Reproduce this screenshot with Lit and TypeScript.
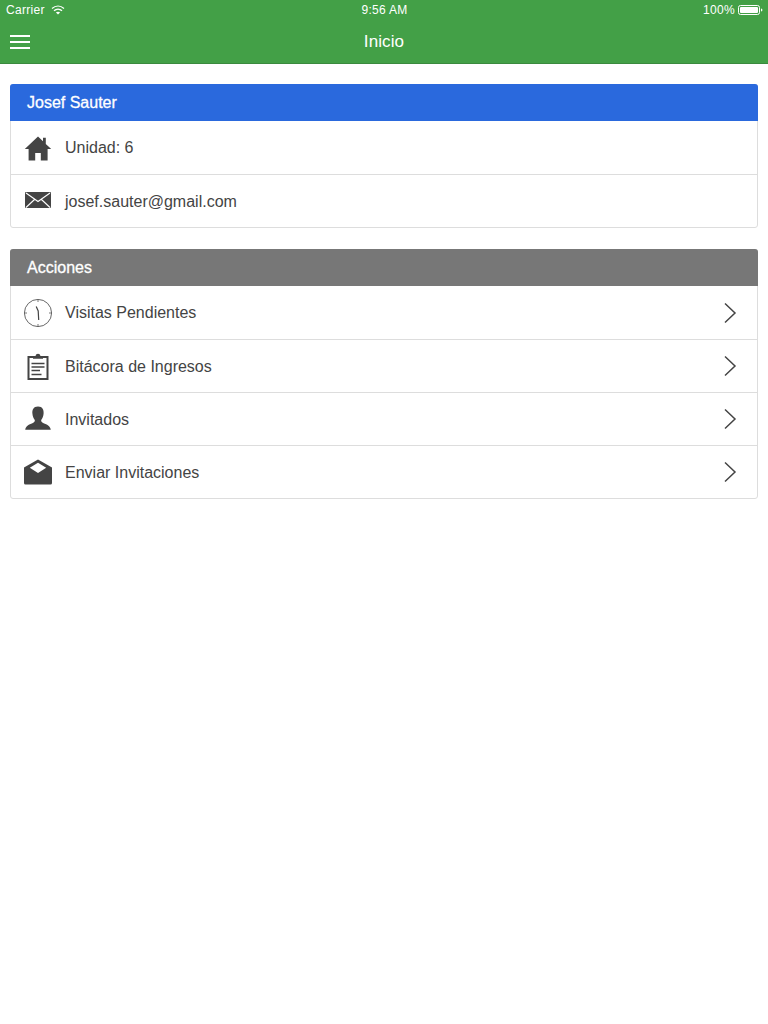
import { LitElement, html, css, svg } from "lit";
import { customElement } from "lit/decorators.js";

const icons: Record<string, unknown> = {
  home: svg`<path fill="#444" d="M14 2.5 L19 7.2 V3.8 H21.8 V9.9 L27.2 15 H23.6 V26.5 H16.8 V19 H11.2 V26.5 H4.6 V15 H0.8 Z"/>`,
  mail: svg`<rect x="1" y="5" width="26" height="16" rx="1" fill="#444"/><path d="M2 6 L14 14.5 L26 6 M2 20.5 L10.5 12.5 M26 20.5 L17.5 12.5" fill="none" stroke="#fff" stroke-width="1.1"/>`,
  clock: svg`<circle cx="14" cy="14" r="13.6" fill="none" stroke="#555" stroke-width="0.9"/><path d="M12.2 7.5 L14.2 12 L14.7 21" fill="none" stroke="#444" stroke-width="1.2"/><g stroke="#777" stroke-width="1"><path d="M14 1v2M14 25v2M1 14h2M25 14h2"/></g>`,
  clip: svg`<path fill="none" stroke="#444" stroke-width="2" d="M9 5 H4.5 V27 H23.5 V5 H19"/><path fill="#444" d="M9 6.8 V4 H11.6 C11.8 1 16.2 1 16.4 4 H19 V6.8 Z"/><path stroke="#444" stroke-width="1.6" d="M7.5 11.5 H20.5 M7.5 15 H20.5 M7.5 18.5 H16 M7.5 22.5 H17.5"/>`,
  user: svg`<path fill="#444" d="M14 1.5 C18.6 1.5 20 5 19.6 8.6 C19.4 11.5 18.4 13.5 17.2 15 C17 16.6 17.6 17.3 19.6 18.2 C23 19.6 26 20.4 26.8 24.8 H1.2 C2 20.4 5 19.6 8.4 18.2 C10.4 17.3 11 16.6 10.8 15 C9.6 13.5 8.6 11.5 8.4 8.6 C8 5 9.4 1.5 14 1.5 Z"/>`,
  open: svg`<path fill="#444" d="M14 1.5 L28 9.5 V25 a1.5 1.5 0 0 1 -1.5 1.5 H1.5 A1.5 1.5 0 0 1 0 25 V9.5 Z"/><path fill="#fff" d="M14 4.8 L22.2 9.8 L14 15 L5.8 9.8 Z"/>`,
};

@customElement("app-root")
export class AppRoot extends LitElement {
  static styles = css`
    :host { display: block; min-height: 1024px; background: #fff; font-family: "Liberation Sans", Arial, sans-serif; color: #444; }
    .nav { height: 64px; box-sizing: border-box; background: #43a047; border-bottom: 1px solid #3a8a3e; color: #fff; display: flex; flex-direction: column; }
    .status { height: 20px; flex: none; display: grid; grid-template-columns: 1fr auto 1fr; align-items: center; padding: 0 5px 0 6px; font-size: 12px; letter-spacing: 0.3px; }
    .status-left { display: flex; align-items: center; gap: 6px; }
    .status-right { display: flex; align-items: center; justify-content: flex-end; gap: 3px; }
    .bar { flex: 1; display: grid; grid-template-columns: 1fr auto 1fr; align-items: center; padding: 0 10px; }
    .title { font-size: 17px; letter-spacing: 0.1px; }
    .burger { display: flex; flex-direction: column; gap: 4px; width: 20px; }
    .burger i { display: block; height: 2px; background: #fff; }
    .content { padding: 20px 10px 0; display: flex; flex-direction: column; gap: 21px; }
    .panel { border: 1px solid #ddd; border-radius: 3px; }
    .head { height: 37px; box-sizing: border-box; margin: -1px -1px 0; padding: 0 17px; display: flex; align-items: center; color: #fff; font-size: 16px; font-weight: 400; border-radius: 3px 3px 0 0; -webkit-text-stroke: 0.3px #fff; }
    .blue { background: #2a69dd; }
    .gray { background: #777; }
    .row { height: 53px; box-sizing: border-box; display: flex; align-items: center; padding: 0 13px; gap: 13px; font-size: 16px; color: #444; }
    .row + .row { border-top: 1px solid #ddd; }
    .row svg.ic { width: 28px; height: 28px; flex: none; }
    .label { flex: 1; padding-top: 1px; }
    .chev { width: 16px; height: 22px; flex: none; margin-right: 6px; }
  `;

  private row(icon: string, label: string, chevron = false) {
    return html`<div class="row">
      <svg class="ic" viewBox="0 0 28 28">${icons[icon]}</svg>
      <span class="label">${label}</span>
      ${chevron
        ? html`<svg class="chev" viewBox="0 0 16 22"><path d="M3 1.5 L13 11 L3 20.5" fill="none" stroke="#444" stroke-width="1.5"/></svg>`
        : ""}
    </div>`;
  }

  render() {
    return html`
      <div class="nav">
        <div class="status">
          <div class="status-left">
            <span>Carrier</span>
            <svg width="14" height="10" viewBox="0 0 14 10"><path d="M1 3.6 C4.6 0.4 9.4 0.4 13 3.6 M3 5.7 C5.3 3.7 8.7 3.7 11 5.7" fill="none" stroke="#fff" stroke-width="1.3"/><path d="M4.9 7.4 C6.1 6.4 7.9 6.4 9.1 7.4 L7 9.6 Z" fill="#fff"/></svg>
          </div>
          <span>9:56 AM</span>
          <div class="status-right">
            <span>100%</span>
            <svg width="25" height="10" viewBox="0 0 25 10"><rect x="0.5" y="0.5" width="21" height="9" rx="2" fill="none" stroke="#fff" stroke-width="1"/><rect x="2" y="2" width="18" height="6" rx="1" fill="#fff"/><path d="M23 3.5 C24 3.7 24.4 4.2 24.4 5 C24.4 5.8 24 6.3 23 6.5 Z" fill="#fff"/></svg>
          </div>
        </div>
        <div class="bar">
          <div class="burger"><i></i><i></i><i></i></div>
          <div class="title">Inicio</div>
          <div></div>
        </div>
      </div>
      <div class="content">
        <div class="panel">
          <div class="head blue">Josef Sauter</div>
          ${this.row("home", "Unidad: 6")}
          ${this.row("mail", "josef.sauter@gmail.com")}
        </div>
        <div class="panel">
          <div class="head gray">Acciones</div>
          ${this.row("clock", "Visitas Pendientes", true)}
          ${this.row("clip", "Bitácora de Ingresos", true)}
          ${this.row("user", "Invitados", true)}
          ${this.row("open", "Enviar Invitaciones", true)}
        </div>
      </div>
    `;
  }
}
